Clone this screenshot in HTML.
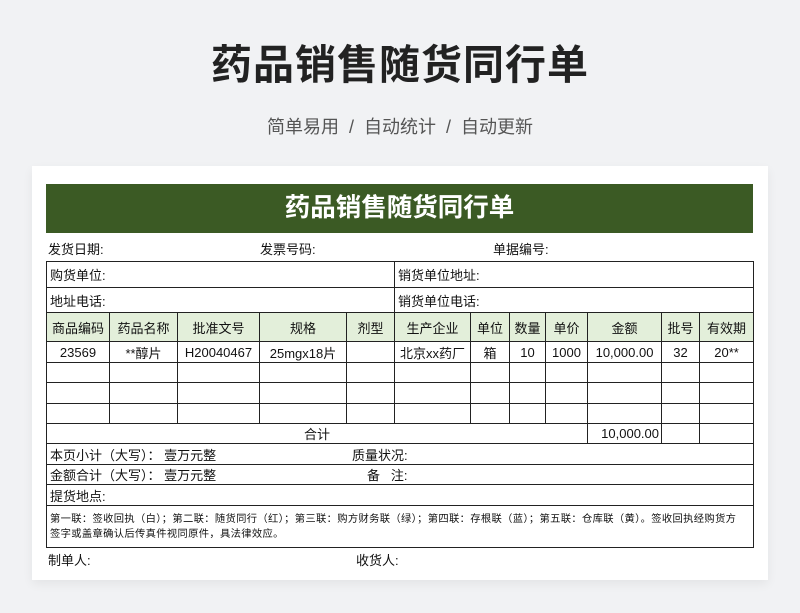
<!DOCTYPE html>
<html><head><meta charset="utf-8"><style>
*{margin:0;padding:0;box-sizing:border-box}
body{width:800px;height:613px;background:#f1f2f4;font-family:"Liberation Sans","Noto Sans CJK SC",sans-serif;position:relative;overflow:hidden;color:#111}
.t{position:absolute;left:0;width:800px;text-align:center}
.card{position:absolute;left:32px;top:166px;width:736px;height:414px;background:#fff;box-shadow:0 4px 10px rgba(0,0,0,.06)}
.hd{position:absolute;left:46px;top:184px;width:707px;height:49px;background:#3b5a24;color:#fff;font-size:25.5px;font-weight:bold;text-align:center;line-height:49px}
.inf{position:absolute;top:239px;font-size:13px}
table{position:absolute;left:46px;top:261px;border-collapse:collapse;table-layout:fixed;width:707px}
td{border:1.3px solid #222;font-size:13px;text-align:center;padding:0;white-space:nowrap;overflow:hidden}
td.l{text-align:left;padding-left:3px}
tr.h td{background:#e3efda}
.f{position:absolute;top:550px;font-size:13px}
</style></head><body>
<div class="t" style="top:31px;font-size:41px;font-weight:bold;color:#222;letter-spacing:1px">药品销售随货同行单</div>
<div class="t" style="top:113px;font-size:18px;color:#555">简单易用 &nbsp;/&nbsp; 自动统计 &nbsp;/&nbsp; 自动更新</div>
<div class="card"></div>
<div class="hd">药品销售随货同行单</div>
<div class="inf" style="left:48px">发货日期:</div>
<div class="inf" style="left:260px">发票号码:</div>
<div class="inf" style="left:493px">单据编号:</div>
<table>
<colgroup><col style="width:63px"><col style="width:68px"><col style="width:82px"><col style="width:87px"><col style="width:48px"><col style="width:76px"><col style="width:39px"><col style="width:36px"><col style="width:42px"><col style="width:74px"><col style="width:38px"><col style="width:54px"></colgroup>
<tr style="height:26px"><td class="l" colspan="5">购货单位:</td><td class="l" colspan="7">销货单位地址:</td></tr>
<tr style="height:25px"><td class="l" colspan="5">地址电话:</td><td class="l" colspan="7">销货单位电话:</td></tr>
<tr class="h" style="height:29px"><td>商品编码</td><td>药品名称</td><td>批准文号</td><td>规格</td><td>剂型</td><td>生产企业</td><td>单位</td><td>数量</td><td>单价</td><td>金额</td><td>批号</td><td>有效期</td></tr>
<tr style="height:21px"><td>23569</td><td>**醇片</td><td>H20040467</td><td>25mgx18片</td><td></td><td>北京xx药厂</td><td>箱</td><td>10</td><td>1000</td><td>10,000.00</td><td>32</td><td>20**</td></tr>
<tr style="height:20px"><td></td><td></td><td></td><td></td><td></td><td></td><td></td><td></td><td></td><td></td><td></td><td></td></tr>
<tr style="height:21px"><td></td><td></td><td></td><td></td><td></td><td></td><td></td><td></td><td></td><td></td><td></td><td></td></tr>
<tr style="height:20px"><td></td><td></td><td></td><td></td><td></td><td></td><td></td><td></td><td></td><td></td><td></td><td></td></tr>
<tr style="height:20px"><td colspan="9">合计</td><td style="text-align:right;padding-right:2px">10,000.00</td><td></td><td></td></tr>
<tr style="height:21px"><td class="l" colspan="12"><span style="display:inline-block;width:302px">本页小计（大写）：&nbsp;壹万元整</span>质量状况:</td></tr>
<tr style="height:20px"><td class="l" colspan="12"><span style="display:inline-block;width:317px">金额合计（大写）：&nbsp;壹万元整</span>备&nbsp;&nbsp;&nbsp;注:</td></tr>
<tr style="height:21px"><td class="l" colspan="12">提货地点:</td></tr>
<tr style="height:42px"><td class="l" colspan="12" style="font-size:10.3px;letter-spacing:0.33px;white-space:nowrap;line-height:15px;text-align:left">第一联：签收回执（白）；第二联：随货同行（红）；第三联：购方财务联（绿）；第四联：存根联（蓝）；第五联：仓库联（黄）。签收回执经购货方<br>签字或盖章确认后传真件视同原件，具法律效应。</td></tr>
</table>
<div class="f" style="left:48px">制单人:</div>
<div class="f" style="left:356px">收货人:</div>
</body></html>
